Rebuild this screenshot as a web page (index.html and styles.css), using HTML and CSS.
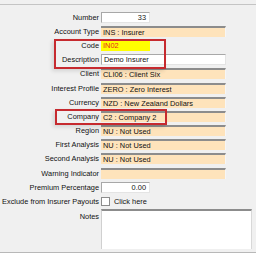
FILE: index.html
```html
<!DOCTYPE html>
<html lang="en">
<head>
    <meta charset="UTF-8">
    <title>Insurer</title>
    <link rel="stylesheet" href="styles.css">
</head>
<body>
    <div class="form">
        <div class="row">
            <div class="label">Number</div>
            <div class="field short white num">33</div>
        </div>
        <div class="row">
            <div class="label">Account Type</div>
            <div class="field">INS : Insurer</div>
        </div>
        <div class="row">
            <div class="label">Code</div>
            <div class="field short code">IN02</div>
        </div>
        <div class="row">
            <div class="label">Description</div>
            <div class="field white">Demo Insurer</div>
        </div>
        <div class="row">
            <div class="label">Client</div>
            <div class="field">CLI06 : Client Six</div>
        </div>
        <div class="row">
            <div class="label">Interest Profile</div>
            <div class="field">ZERO : Zero Interest</div>
        </div>
        <div class="row">
            <div class="label">Currency</div>
            <div class="field">NZD : New Zealand Dollars</div>
        </div>
        <div class="row">
            <div class="label">Company</div>
            <div class="field">C2 : Company 2</div>
        </div>
        <div class="row">
            <div class="label">Region</div>
            <div class="field">NU : Not Used</div>
        </div>
        <div class="row">
            <div class="label">First Analysis</div>
            <div class="field">NU : Not Used</div>
        </div>
        <div class="row">
            <div class="label">Second Analysis</div>
            <div class="field">NU : Not Used</div>
        </div>
        <div class="row">
            <div class="label">Warning Indicator</div>
            <div class="field"></div>
        </div>
        <div class="row">
            <div class="label">Premium Percentage</div>
            <div class="field short white num">0.00</div>
        </div>
        <div class="row">
            <div class="label">Exclude from Insurer Payouts</div>
            <div class="check-wrap"><span class="check"></span>Click here</div>
        </div>
        <div class="row notes-row">
            <div class="label">Notes</div>
            <div class="notes"></div>
        </div>

        <!-- annotation boxes -->
        <div class="mark mark-code"></div>
        <div class="mark mark-company"></div>
    </div>
</body>
</html>
```

FILE: styles.css
```css
* {
    margin: 0;
    padding: 0;
    box-sizing: border-box;
}

body {
    background-color: #f0f0f0;
    font-family: 'Liberation Sans', Arial, sans-serif;
    font-size: 7.4px;
    color: #111;
    width: 256px;
    height: 253px;
    overflow: hidden;
}

/* Form panel */
.form {
    position: relative;
    border-top: 1px solid #c4c4c4;
    border-bottom: 1px solid #b8b8b8;
    margin-top: 4px;
    height: 249px;
    padding-top: 5px;
}

.row {
    display: grid;
    grid-template-columns: 101px 1fr;
    align-items: center;
    height: 14.2px;
}

.label {
    text-align: right;
    padding-right: 2px;
    white-space: nowrap;
}

/* Fields */
.field {
    width: 125px;
    height: 11px;
    line-height: 9px;
    padding: 0 2px;
    background-color: #fee3bb;
    border-top: 2px solid #8c8c8c;
    border-right: 1px solid #f6f6f6;
    white-space: nowrap;
    overflow: hidden;
}

.field.short {
    width: 49px;
}

.field.white {
    background-color: #fff;
    border: 1px solid #a8a8a8;
    border-right-color: #e4e4e4;
    border-bottom-color: #e4e4e4;
}

.field.num {
    text-align: right;
    padding-right: 3px;
}

.field.code {
    background-color: #ffff00;
    color: #e8261c;
    border: none;
    line-height: 11px;
}

/* Checkbox */
.check-wrap {
    display: flex;
    align-items: center;
    gap: 4px;
}

.check {
    width: 9px;
    height: 9px;
    background-color: #fff;
    border: 1px solid #8c8c8c;
}

/* Notes */
.notes-row {
    align-items: start;
}

.notes-row .label {
    padding-top: 3px;
}

.notes {
    width: 151px;
    height: 40px;
    background-color: #fff;
    border-top: 2px solid #8c8c8c;
    border-left: 1px solid #d0d0d0;
    border-right: 1px solid #d8d8d8;
}

/* Annotation boxes */
.mark {
    position: absolute;
    border: 2px solid #c62a2f;
    box-shadow: -2px 2px 4px rgba(0, 0, 0, 0.12);
}

.mark-code {
    left: 54px;
    top: 34px;
    width: 112px;
    height: 30px;
}

.mark-company {
    left: 55px;
    top: 104px;
    width: 112px;
    height: 16px;
}
```
